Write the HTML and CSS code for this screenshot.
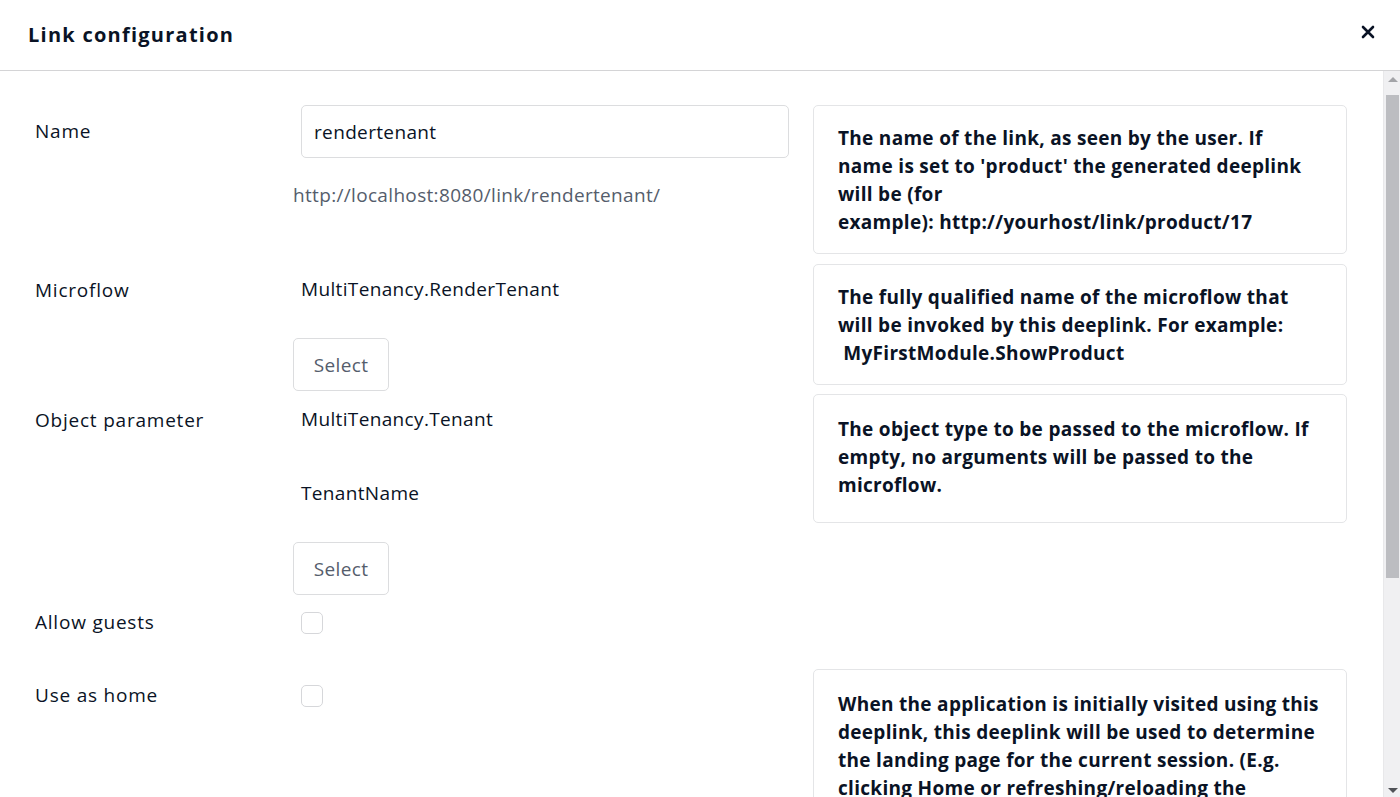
FILE: index.html
```html
<!DOCTYPE html>
<html>
<head>
<meta charset="utf-8">
<link rel="stylesheet" href="styles.css">
</head>
<body>
<div class="dialog">
  <header class="dlg-header">
    <h1 class="dlg-title">Link configuration</h1>
    <button class="close-btn" aria-label="Close">
      <svg width="14" height="14" viewBox="0 0 14 14"><path d="M2 2 L12 12 M12 2 L2 12" stroke="#0a1325" stroke-width="2.6" stroke-linecap="round"/></svg>
    </button>
  </header>
  <div class="dlg-body">
    <div class="scroll-content">
      <div class="row row-name">
        <div class="label">Name</div>
        <div class="values">
          <input class="text-input" type="text" value="rendertenant">
          <div class="url">http://localhost:8080/link/rendertenant/</div>
        </div>
        <div class="help">The name of the link, as seen by the user. If name is set to 'product' the generated deeplink will be (for<br>example):&nbsp;http://yourhost/link/product/17</div>
      </div>
      <div class="row row-micro">
        <div class="label">Microflow</div>
        <div class="values stack">
          <div class="value-text">MultiTenancy.RenderTenant</div>
          <button class="select-btn">Select</button>
        </div>
        <div class="help">The fully qualified name of the microflow that will be invoked by this deeplink. For example:<br>&nbsp;MyFirstModule.ShowProduct</div>
      </div>
      <div class="row row-obj">
        <div class="label">Object parameter</div>
        <div class="values stack">
          <div class="value-text">MultiTenancy.Tenant</div>
          <div class="value-text">TenantName</div>
          <button class="select-btn">Select</button>
        </div>
        <div class="help help-tall">The object type to be passed to the microflow. If empty, no arguments will be passed to the microflow.</div>
      </div>
      <div class="row row-guests">
        <div class="label">Allow guests</div>
        <div class="values stack">
          <div class="check-wrap"><span class="checkbox"></span></div>
        </div>
        <div></div>
      </div>
      <div class="row row-home">
        <div class="label">Use as home</div>
        <div class="values stack">
          <div class="check-wrap"><span class="checkbox"></span></div>
        </div>
        <div class="help help-home">When the application is initially visited using this deeplink, this deeplink will be used to determine the landing page for the current session. (E.g. clicking Home or refreshing/reloading the application will navigate to this page.)</div>
      </div>
    </div>
    <div class="scrollbar">
      <div class="sb-arrow sb-up"></div>
      <div class="sb-track">
        <div class="sb-thumb"></div>
      </div>
      <div class="sb-arrow sb-down"></div>
    </div>
  </div>
</div>
</body>
</html>
```

FILE: styles.css
```css
* { box-sizing: border-box; }
html, body {
  margin: 0;
  padding: 0;
  height: 100%;
  background: #fff;
  overflow: hidden;
}
body {
  font-family: "Open Sans", "Noto Sans", sans-serif;
  color: #0a1325;
  font-size: 19px;
}
.dialog {
  display: flex;
  flex-direction: column;
  height: 797px;
}
.dlg-header {
  height: 71px;
  flex: 0 0 71px;
  border-bottom: 1px solid #d4d4d6;
  display: flex;
  align-items: center;
  justify-content: space-between;
  padding: 0 24px 0 28px;
}
.dlg-title {
  margin: 0;
  font-size: 20px;
  font-weight: 700;
  letter-spacing: 1.25px;
  color: #0a1325;
  line-height: 28px;
}
.close-btn {
  background: none;
  border: 0;
  padding: 0;
  width: 14px;
  height: 14px;
  display: flex;
  margin-right: 1px;
  margin-top: -6px;
}
.dlg-body {
  flex: 1;
  display: flex;
  overflow: hidden;
}
.scroll-content {
  flex: 1;
  padding: 34px 0 0 35px;
  overflow: hidden;
}
.row {
  display: grid;
  grid-template-columns: 258px 520px 534px;
  align-items: start;
}
.row-micro { margin-top: 10px; }
.row-obj { margin-top: 3px; }
.row-guests { margin-top: 1px; }
.row-home { margin-top: 20px; }
.label {
  padding-top: 14px;
  line-height: 24px;
  font-size: 19px;
  letter-spacing: 0.78px;
  color: #0a1325;
}
.values { display: flex; flex-direction: column; align-items: flex-start; }
.stack { gap: 21px; }
.text-input {
  margin-left: 8px;
  width: 488px;
  height: 53px;
  border: 1px solid #dcdddf;
  border-radius: 5px;
  padding: 0 12px;
  font-family: inherit;
  font-size: 19px;
  letter-spacing: 0.35px;
  color: #0a1325;
  outline: none;
}
.url {
  margin-top: 25px;
  line-height: 24px;
  color: #555d6c;
  font-size: 19px;
  letter-spacing: 0.33px;
}
.value-text {
  height: 53px;
  padding-top: 13px;
  padding-left: 8px;
  line-height: 24px;
  letter-spacing: 0.35px;
  color: #0a1325;
}
.select-btn {
  width: 96px;
  height: 53px;
  border: 1px solid #dcdddf;
  border-radius: 5px;
  background: #fff;
  font-family: inherit;
  font-size: 19px;
  letter-spacing: 0.35px;
  color: #555d6c;
  padding: 0;
}
.check-wrap {
  height: 53px;
  display: flex;
  align-items: center;
  padding-left: 8px;
}
.checkbox {
  display: block;
  width: 22px;
  height: 22px;
  border: 1px solid #d6d7da;
  border-radius: 5px;
  background: #fff;
}
.help {
  border: 1px solid #e4e5e7;
  border-radius: 5px;
  padding: 18px 24px 17px 24px;
  font-weight: 700;
  font-size: 19px;
  letter-spacing: 0.3px;
  line-height: 28px;
  color: #0a1325;
}
.help-tall { padding-top: 20px; padding-bottom: 23px; }
.help-home { padding-top: 20px; }
.scrollbar {
  width: 17px;
  flex: 0 0 17px;
  background: #f0f0f2;
  display: flex;
  flex-direction: column;
  border-left: 1px solid #e8e8ea;
}
.sb-arrow {
  height: 17px;
  flex: 0 0 17px;
  position: relative;
}
.sb-up::after, .sb-down::after {
  content: "";
  position: absolute;
  left: 4px;
  width: 0;
  height: 0;
  border-left: 5px solid transparent;
  border-right: 5px solid transparent;
}
.sb-up::after { top: 6px; border-bottom: 5px solid #a3a4a8; }
.sb-down::after { top: 8px; border-top: 5px solid #505257; }
.sb-track {
  flex: 1;
  padding: 7px 1px 0 2px;
}
.sb-thumb {
  height: 483px;
  background: #bcbdc1;
}
```
